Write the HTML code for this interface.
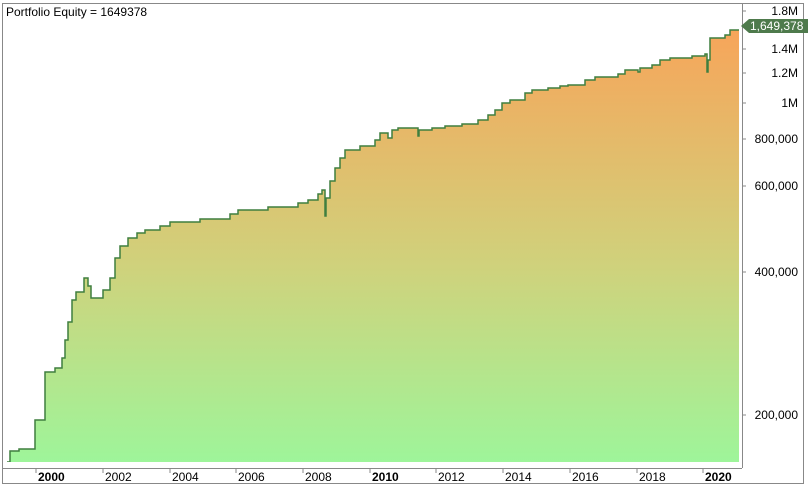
<!DOCTYPE html><html><head><style>
body{margin:0;width:808px;height:491px;background:#fff;overflow:hidden;font-family:"Liberation Sans",Arial,sans-serif;}
svg text{font-family:"Liberation Sans",Arial,sans-serif;font-size:12px;fill:#000}
</style></head><body>
<svg width="808" height="491" viewBox="0 0 808 491" xmlns="http://www.w3.org/2000/svg">
<defs><linearGradient id="g" x1="0" y1="30" x2="0" y2="462" gradientUnits="userSpaceOnUse">
<stop offset="0" stop-color="#f7a55a"/><stop offset="0.55" stop-color="#cfd27c"/><stop offset="1" stop-color="#9ef59a"/></linearGradient></defs>
<rect x="2.5" y="3.5" width="801" height="480" fill="none" stroke="#888"/>
<line x1="742.5" y1="3" x2="742.5" y2="468" stroke="#888"/>
<line x1="2" y1="468.5" x2="742" y2="468.5" stroke="#888"/>
<path d="M7,462 H10 V451 H19 V449 H35 V420 H45 V372 H55 V368 H62 V358 H65 V340 H68 V322 H72 V300 H76 V292 H84 V278 H88 V286 H91 V298 H103 V290 H110 V278 H115 V258 H120 V246 H128 V238 H137 V233 H145 V230 H160 V226 H170 V222 H200 V219 H230 V214 H238 V210 H268 V207 H298 V203 H308 V200 H318 V194 H322 V190 H325 V216 H326 V198 H330 V181 H335 V168 H340 V158 H345 V150 H360 V146 H375 V140 H380 V133 H388 V138 H392 V130 H398 V128 H418 V136 H419 V130 H432 V128 H445 V126 H462 V124 H478 V120 H488 V115 H495 V110 H502 V103 H510 V100 H525 V93 H532 V90 H548 V88 H560 V86 H568 V85 H585 V80 H595 V77 H618 V74 H625 V70 H638 V72 H640 V68 H652 V65 H660 V60 H670 V58 H692 V56 H705 V54 H707 V72 H708 V60 H710 V38 H725 V35 H730 V30 H739 V462 Z" fill="url(#g)"/>
<path d="M7,462 H10 V451 H19 V449 H35 V420 H45 V372 H55 V368 H62 V358 H65 V340 H68 V322 H72 V300 H76 V292 H84 V278 H88 V286 H91 V298 H103 V290 H110 V278 H115 V258 H120 V246 H128 V238 H137 V233 H145 V230 H160 V226 H170 V222 H200 V219 H230 V214 H238 V210 H268 V207 H298 V203 H308 V200 H318 V194 H322 V190 H325 V216 H326 V198 H330 V181 H335 V168 H340 V158 H345 V150 H360 V146 H375 V140 H380 V133 H388 V138 H392 V130 H398 V128 H418 V136 H419 V130 H432 V128 H445 V126 H462 V124 H478 V120 H488 V115 H495 V110 H502 V103 H510 V100 H525 V93 H532 V90 H548 V88 H560 V86 H568 V85 H585 V80 H595 V77 H618 V74 H625 V70 H638 V72 H640 V68 H652 V65 H660 V60 H670 V58 H692 V56 H705 V54 H707 V72 H708 V60 H710 V38 H725 V35 H730 V30 H739" fill="none" stroke="#3f7f3f" stroke-width="1.5"/>
<rect x="7" y="462" width="733" height="6" fill="#fff"/>
<text x="6" y="16">Portfolio Equity = 1649378</text>
<g stroke="#888">
<line x1="742" y1="11" x2="746" y2="11"/><line x1="742" y1="49" x2="746" y2="49"/><line x1="742" y1="73" x2="746" y2="73"/><line x1="742" y1="103" x2="746" y2="103"/><line x1="742" y1="139" x2="746" y2="139"/><line x1="742" y1="186" x2="746" y2="186"/><line x1="742" y1="272" x2="746" y2="272"/><line x1="742" y1="415" x2="746" y2="415"/>
<line x1="36" y1="468" x2="36" y2="473"/><line x1="103" y1="468" x2="103" y2="473"/><line x1="170" y1="468" x2="170" y2="473"/><line x1="236" y1="468" x2="236" y2="473"/><line x1="303" y1="468" x2="303" y2="473"/><line x1="370" y1="468" x2="370" y2="473"/><line x1="436" y1="468" x2="436" y2="473"/><line x1="503" y1="468" x2="503" y2="473"/><line x1="570" y1="468" x2="570" y2="473"/><line x1="637" y1="468" x2="637" y2="473"/><line x1="703" y1="468" x2="703" y2="473"/>
</g>
<g text-anchor="end">
<text x="798" y="15">1.8M</text><text x="798" y="53">1.4M</text><text x="798" y="77">1.2M</text><text x="798" y="107">1M</text><text x="798" y="143">800,000</text><text x="798" y="190">600,000</text><text x="798" y="276">400,000</text><text x="798" y="419">200,000</text>
</g>
<polygon points="741,26 749,19 808,19 808,33 749,33" fill="#4e7a4c"/>
<text x="750" y="30" style="fill:#fff">1,649,378</text>
<g>
<text x="38" y="481" style="font-weight:bold">2000</text><text x="105" y="481">2002</text><text x="172" y="481">2004</text><text x="238" y="481">2006</text><text x="305" y="481">2008</text><text x="372" y="481" style="font-weight:bold">2010</text><text x="438" y="481">2012</text><text x="505" y="481">2014</text><text x="572" y="481">2016</text><text x="639" y="481">2018</text><text x="705" y="481" style="font-weight:bold">2020</text>
</g>
</svg>
</body></html>
